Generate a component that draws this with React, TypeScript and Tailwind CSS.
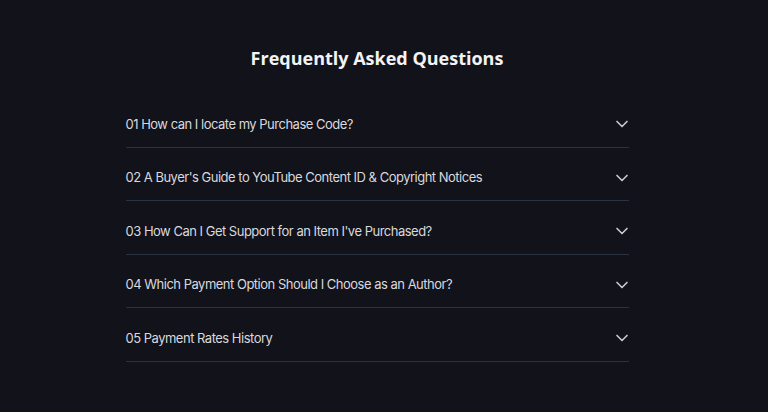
import React from "react";
import { ChevronDown } from "lucide-react";

const questions = [
  "01 How can I locate my Purchase Code?",
  "02 A Buyer's Guide to YouTube Content ID & Copyright Notices",
  "03 How Can I Get Support for an Item I've Purchased?",
  "04 Which Payment Option Should I Choose as an Author?",
  "05 Payment Rates History",
];

const App: React.FC = () => {
  return (
    <div className="min-h-[412px] w-full bg-[#12121b] pr-[14px] pt-[44px] font-['Inter',sans-serif]">
      <h2 className="text-center text-[18px] font-bold leading-[28px] text-[#f3f3f5] font-['Open_Sans',sans-serif]">
        Frequently Asked Questions
      </h2>
      <div className="mx-auto mt-[22px] w-[503px]">
        {questions.map((q) => (
          <div
            key={q}
            className="flex h-[53.5px] items-center justify-between border-b border-[#2a3440] pt-[8px]"
          >
            <span className="text-[13px] tracking-[-0.5px] text-[#d8d9de]">{q}</span>
            <ChevronDown className="mr-[-3px] h-[20px] w-[20px] text-[#c8c9ce]" strokeWidth={2} />
          </div>
        ))}
      </div>
    </div>
  );
};

export default App;
